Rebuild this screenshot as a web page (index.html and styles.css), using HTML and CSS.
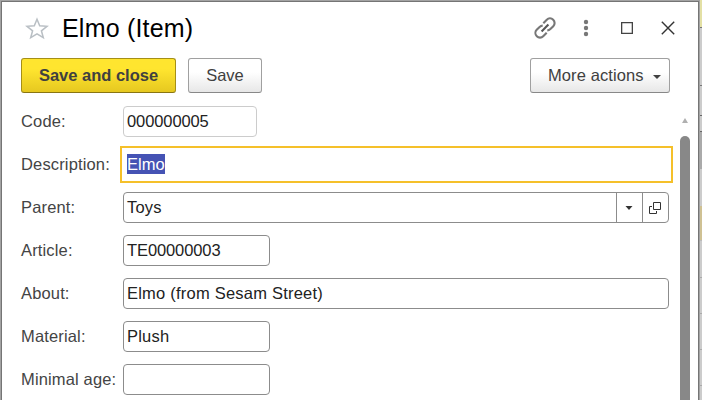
FILE: index.html
```
<!DOCTYPE html>
<html lang="en">
<head>
<meta charset="utf-8">
<title>Elmo (Item)</title>
<link rel="stylesheet" href="styles.css">
</head>
<body>
<div class="desktop">
  <main class="window">
    <header class="titlebar">
      <svg class="star" width="24" height="23" viewBox="0 0 24 23"><path d="M12 2.2 L14.7 8.8 L22 9.3 L16.4 13.8 L18.3 20.7 L12 16.9 L5.7 20.7 L7.6 13.8 L2 9.3 L9.3 8.8 Z"/></svg>
      <h1>Elmo (Item)</h1>
      <div class="tools">
        <svg width="24" height="24" viewBox="0 0 24 24" class="link"><path d="M10.3 7.2 L13.8 3.7 C15.6 1.9 18.4 2 20.2 3.8 C22 5.6 22.1 8.4 20.3 10.2 L17.4 13.1 C16.6 13.9 15.5 14.4 14.3 14.4 M13.7 16.8 L10.2 20.3 C8.4 22.1 5.6 22 3.8 20.2 C2 18.4 1.9 15.6 3.7 13.8 L6.6 10.9 C7.4 10.1 8.5 9.6 9.7 9.6"/><path class="bar" d="M8.6 15.4 L15.4 8.6"/></svg>
        <svg width="6" height="18" viewBox="0 0 6 18" class="dots"><circle cx="3" cy="3" r="2.2"/><circle cx="3" cy="9" r="2.2"/><circle cx="3" cy="15" r="2.2"/></svg>
        <svg width="12" height="12" viewBox="0 0 12 12" class="max"><path d="M.6 .6H11.4V11.4H.6Z"/></svg>
        <svg width="14" height="14" viewBox="0 0 14 14" class="close"><path d="M.8 .8L13.2 13.2M13.2 .8L.8 13.2"/></svg>
      </div>
    </header>
    <div class="commands">
      <button class="btn primary">Save and close</button>
      <button class="btn save">Save</button>
      <button class="btn more">More actions<svg width="8" height="4" viewBox="0 0 8 4"><path d="M0 0H8L4 4Z"/></svg></button>
    </div>
    <section class="form">
      <div class="row"><label>Code:</label><div class="field code">000000005</div></div>
      <div class="row"><label>Description:</label><div class="field focus"><span class="selected">Elmo</span></div></div>
      <div class="row"><label>Parent:</label><div class="field wide parent"><span class="value">Toys</span>
        <span class="pick"><svg width="8" height="4" viewBox="0 0 8 4"><path d="M.5 0H7.5L4 4Z"/></svg></span>
        <span class="pick open"><svg width="12" height="12" viewBox="0 0 12 12"><path d="M4.5 .5H11.5V7.5H4.5ZM3 4.5H.5V11.5H7.5V9"/></svg></span></div></div>
      <div class="row"><label>Article:</label><div class="field number">TE00000003</div></div>
      <div class="row"><label>About:</label><div class="field wide">Elmo (from Sesam Street)</div></div>
      <div class="row"><label>Material:</label><div class="field">Plush</div></div>
      <div class="row"><label>Minimal age:</label><div class="field"></div></div>
    </section>
    <div class="scrollbar"><svg width="6" height="5" viewBox="0 0 6 5"><path d="M3 0L6 5H0Z"/></svg><div class="thumb"></div></div>
  </main>
  <div class="backdrop"></div>
</div>
</body>
</html>
```

FILE: styles.css
```
* { box-sizing: border-box; }
body { margin: 0; width: 702px; height: 400px; overflow: hidden; background: #fff; font-family: "Liberation Sans", Arial, sans-serif; font-size: 16.5px; color: #222; }
.desktop { display: flex; width: 702px; height: 400px; }
.window { position: relative; width: 700px; height: 400px; overflow: hidden; border: 1px solid #a3a3a3; border-width: 1px 1px 0; box-shadow: inset 1px 1px #757575, inset -1px 0 #757575; }
.backdrop { width: 2px; background: linear-gradient(#e3e0a4 27px, #777 27px 28px, #ccc 28px 85px, #777 85px 86px, #ccc 86px 115px, #666 115px 116px, #ccc 116px 131px, #666 131px 132px, #aaa 132px 169px, #ccc 169px 206px, #cfc193 206px 240px, #bbb 240px 241px, #ccc 241px 277px, #aaa 277px 278px, #ccc 278px 313px, #aaa 313px 314px, #ccc 314px 349px, #aaa 349px 350px, #ccc 350px 385px, #aaa 385px 386px, #ccc 386px); }
.titlebar { display: flex; align-items: center; height: 56px; padding: 0 24px 2px 24px; }
.star { fill: #fff; stroke: #b9bfc4; stroke-width: 1.5; }
h1 { margin: 0 0 0 13px; font-size: 25px; font-weight: 400; line-height: 30px; color: #000; letter-spacing: .2px; }
.tools { display: flex; align-items: center; margin-left: auto; height: 52px; padding-bottom: 1px; }
.tools svg { fill: none; stroke: #333; stroke-width: 1.4; }
.tools .link { stroke: #777; stroke-width: 2.1; margin-right: 26px; }
.link .bar { stroke: #555; }
.tools .dots { fill: #777; stroke: none; margin-right: 32px; }
.tools .max { margin-right: 28px; stroke: #444; }
.commands { display: flex; height: 37px; padding: 0 29px 0 20px; }
.btn { height: 35px; margin-top: 1px; padding: 0; border: 1px solid #a0a0a0; border-bottom-color: #888; border-radius: 3px; background: linear-gradient(#fff 40%, #e7e7e7); font: 16.5px "Liberation Sans", Arial, sans-serif; color: #404040; }
.primary { width: 155px; margin-right: 12px; border-color: #a58f16; border-bottom-color: #897512; background: linear-gradient(#ffe52f 30%, #e6c820); font-weight: 700; }
.save { width: 74px; }
.more { display: flex; align-items: center; width: 140px; margin-left: auto; padding-left: 17px; letter-spacing: .1px; }
.more svg { margin: 2px 0 0 9px; fill: #404040; }
.form { padding: 6px 0 0 20px; }
.row { display: flex; align-items: center; height: 43px; }
label { width: 102px; color: #444; letter-spacing: .15px; white-space: nowrap; }
.field { display: flex; align-items: center; width: 147px; height: 31px; padding-left: 3px; border: 1px solid #8c8c8c; border-radius: 4px; letter-spacing: .22px; white-space: pre; }
.number { letter-spacing: -.1px; }
.code { width: 134px; border-color: #ccc; letter-spacing: -.1px; }
.wide { width: 546px; }
.focus { width: 553px; height: 37px; margin-left: -3px; padding: 0 0 1px 5px; border: 2px solid #f5c02a; border-radius: 0; letter-spacing: 0; }
.selected { height: 20px; line-height: 20px; background: #4553b4; color: #fff; }
.value { flex: 1; }
.pick { display: flex; align-items: center; justify-content: center; width: 26px; height: 29px; border-left: 1px solid #8c8c8c; fill: #333; }
.pick svg { margin-right: 1px; }
.open { fill: none; stroke: #333; }
.scrollbar { position: absolute; left: 679px; top: 117px; width: 10px; display: flex; flex-direction: column; align-items: center; fill: #b0b0b0; }
.thumb { width: 10px; height: 280px; margin-top: 13px; border-radius: 5px 5px 0 0; background: #888; }
```
